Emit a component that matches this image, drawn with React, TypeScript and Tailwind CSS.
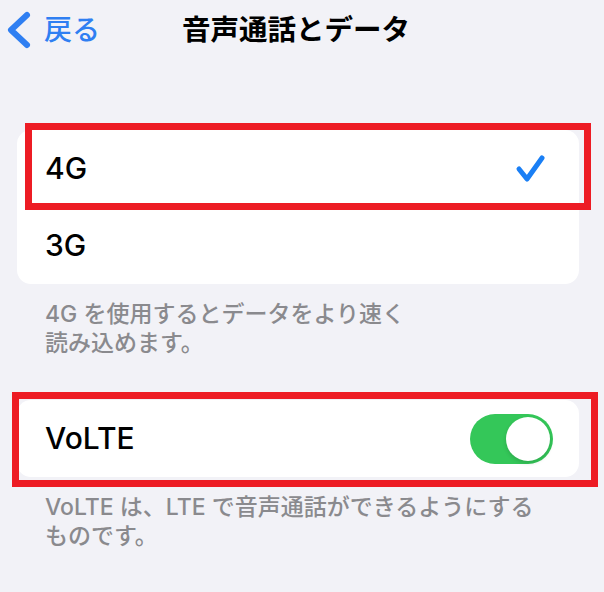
import React from "react";

const jp = { fontFamily: 'Inter, "Noto Sans CJK JP", sans-serif' };

function Toggle() {
  return (
    <div className="flex h-[50px] w-[83px] items-center justify-end rounded-full bg-[#34c759] px-[3px]">
      <div className="h-[44px] w-[44px] rounded-full bg-white shadow-[0_2px_4px_rgba(0,0,0,0.15)]" />
    </div>
  );
}

export default function App() {
  return (
    <div className="h-[592px] w-[604px] overflow-hidden bg-[#f2f2f7]" style={jp}>
      {/* Nav */}
      <div className="relative flex h-[60px] items-center">
        <div className="flex items-center gap-[12px] pl-[4px] text-[#2f7ff2]">
          <svg width="28" height="40" viewBox="0 0 28 40">
            <path d="M23 5 L7 20 L23 35" fill="none" stroke="currentColor" strokeWidth="6" strokeLinecap="round" strokeLinejoin="round" />
          </svg>
          <span className="text-[28px] font-medium leading-none">戻る</span>
        </div>
        <div className="pointer-events-none absolute inset-x-0 top-0 flex h-[60px] items-center justify-center pr-[12px]">
          <span className="text-[28.5px] font-bold leading-none text-black">音声通話とデータ</span>
        </div>
      </div>

      {/* Network section */}
      <div className="relative mx-[17px] mt-[70px] w-[562px] rounded-[14px] bg-white">
        <div className="flex h-[77px] items-center justify-between pl-[28px] pr-[32px]">
          <span className="text-[30px] font-medium text-black">4G</span>
          <svg width="32" height="30" viewBox="0 0 32 30">
            <path d="M4 15 L12 25 L27 4" fill="none" stroke="#1a7ff5" strokeWidth="5" strokeLinecap="round" strokeLinejoin="round" />
          </svg>
        </div>
        <div className="flex h-[77px] items-center pl-[28px]">
          <span className="text-[30px] font-medium text-black">3G</span>
        </div>
        <div className="absolute left-[8px] top-[-7px] h-[87px] w-[566px] border-[7px] border-[#ed1c24]" />
      </div>
      <p className="pl-[45px] pr-[30px] pt-[16px] text-[23px] font-medium leading-[29px] text-[#8a8a8e]">
        4G を使用するとデータをより速く
        <br />
        読み込めます。
      </p>

      {/* VoLTE section */}
      <div className="relative mx-[17px] mt-[42px] w-[562px] rounded-[14px] bg-white">
        <div className="flex h-[77px] items-center justify-between pl-[28px] pr-[26px]">
          <span className="text-[30px] font-medium text-black">VoLTE</span>
          <Toggle />
        </div>
        <div className="absolute left-[-5px] top-[-8px] h-[95px] w-[586px] border-[7px] border-[#ed1c24]" />
      </div>
      <p className="pl-[45px] pr-[30px] pt-[16px] text-[23px] font-medium leading-[29px] text-[#8a8a8e]">
        VoLTE は、LTE で音声通話ができるようにする
        <br />
        ものです。
      </p>
    </div>
  );
}
